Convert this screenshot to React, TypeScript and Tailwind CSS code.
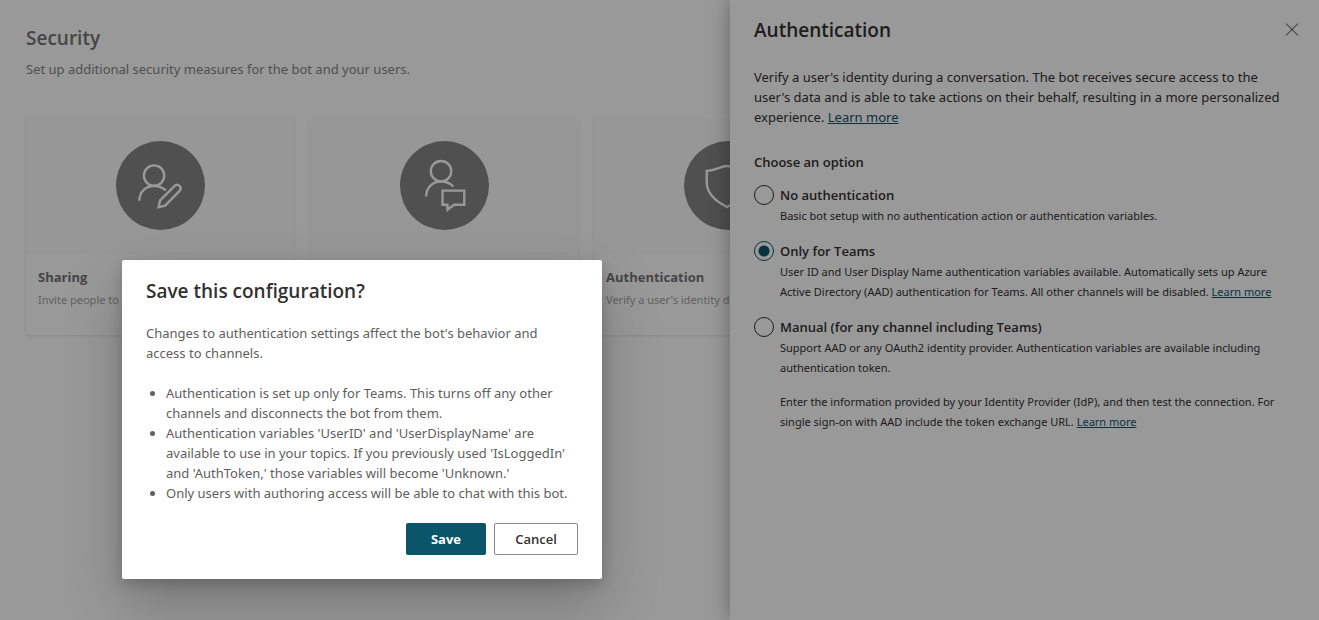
import type { ReactNode } from "react";
import { useState } from "react";

const ShareIcon = () => (
	<svg viewBox="0 0 90 90" className="size-[89px]" fill="none" stroke="white" strokeWidth={2.4}>
		<circle cx="38.500" cy="35" r="10.3" />
		<path d="M23.500 60.500c0-9 6.500-15 15-15 4.500 0 8.800 1.500 11.800 4.500" />
		<path d="M59.300 45.400c1.500-1.500 3.500-1.500 5 0s1.500 3.500 0 5L49.700 65.300l-6.700 1.600 1.600-6.800z" />
	</svg>
);

const AccessIcon = () => (
	<svg viewBox="0 0 90 90" className="size-[89px]" fill="none" stroke="white" strokeWidth={2.4}>
		<circle cx="41.500" cy="30.500" r="10.300" />
		<path d="M26.500 56c0-9 6.500-15 15-15 5 0 9.500 2 12.500 5" />
		<path d="M43 50.200h22v14.300h-10.500l-6.500 5v-5h-5z" />
	</svg>
);

const ShieldIcon = () => (
	<svg viewBox="0 0 90 90" className="size-[89px]" fill="none" stroke="white" strokeWidth={2.4}>
		<path d="M43.500 25.300c-6.500 0-11 4.500-20.500 5v11.500c0 11 7.500 18.500 20.500 25 13-6.500 20.500-14 20.500-25v-11.500c-9.500-.5-14-5-20.500-5z" />
	</svg>
);

const cards = [
	{ title: "Sharing", text: "Invite people to collaborate", icon: <ShareIcon /> },
	{ title: "", text: "", icon: <AccessIcon /> },
	{ title: "Authentication", text: "Verify a user's identity during", icon: <ShieldIcon /> },
];

const LearnMore = () => (
	<a href="#" className="text-[#0b556a] underline underline-offset-1">
		Learn more
	</a>
);

interface OptionProps {
	id: string;
	label: string;
	checked: boolean;
	onChange: () => void;
	children: ReactNode;
}

const Option = ({ id, label, checked, onChange, children }: OptionProps) => (
	<div>
		<div className="flex items-center gap-1.5">
			<input
				type="radio"
				name="auth"
				id={id}
				checked={checked}
				onChange={onChange}
				className="size-5 shrink-0 appearance-none rounded-full border border-[#323130] checked:border-[#0b556a] checked:bg-[radial-gradient(circle,#0b556a_5px,transparent_6px)]"
			/>
			<label htmlFor={id} className="font-['Open_Sans',sans-serif] text-[13px] leading-5 font-semibold">
				{label}
			</label>
		</div>
		<div className="mt-px pl-[26px] text-[11px] leading-5">{children}</div>
	</div>
);

const App = () => {
	const [option, setOption] = useState("teams");

	return (
		<div className="relative min-h-screen overflow-hidden bg-white font-['Noto_Sans','Open_Sans',sans-serif] text-[#323130]">
			{/* Security page */}
			<main className="px-[26px] pt-6 text-[#757575]">
				<h1 className="font-['Open_Sans',sans-serif] text-[19px] leading-7 font-semibold">
					Security
				</h1>
				<p className="mt-[7px] text-[13px] leading-5 text-[#858585]">
					Set up additional security measures for the bot and your users.
				</p>
				<div className="mt-10 flex gap-4">
					{cards.map((card, i) => (
						<section
							key={i}
							className="w-[268px] shrink-0 rounded-xs shadow-[0_1px_3px_rgba(0,0,0,0.1)]"
						>
							<div className="flex h-[135px] justify-center bg-[#fcfcfc] pt-[22px]">
								<div className="size-[89px] rounded-full bg-[#858585]">{card.icon}</div>
							</div>
							<div className="h-[81px] px-3 pt-[13px]">
								<h2 className="font-['Open_Sans',sans-serif] text-[13px] leading-5 font-bold">
									{card.title}
								</h2>
								<p className="mt-[3px] truncate text-[11px] leading-5 text-[#a5a5a5]">
									{card.text}
								</p>
							</div>
						</section>
					))}
				</div>
			</main>

			{/* Authentication panel */}
			<aside className="absolute inset-y-0 right-0 w-[589px] bg-white pr-5 pl-6 shadow-[0_0_20px_rgba(0,0,0,0.35)]">
				<div className="flex items-center justify-between pt-4">
					<h2 className="font-['Open_Sans',sans-serif] text-[19px] leading-7 font-semibold">
						Authentication
					</h2>
					<button type="button" aria-label="Close">
						<svg viewBox="0 0 14 14" className="size-3.5" fill="none" stroke="#323130">
							<path d="M1 0.500l12 12M13 0.500L1 12.500" />
						</svg>
					</button>
				</div>
				<p className="mt-[23px] pr-2 text-[13px] leading-5">
					Verify a user's identity during a conversation. The bot receives secure access to the
					user's data and is able to take actions on their behalf, resulting in a more personalized
					experience. <LearnMore />
				</p>
				<fieldset className="mt-[23px]">
					<legend className="font-['Open_Sans',sans-serif] text-[13px] leading-6 font-semibold">
						Choose an option
					</legend>
					<div className="mt-[11px] flex flex-col gap-[15px]">
						<Option
							id="none"
							label="No authentication"
							checked={option === "none"}
							onChange={() => setOption("none")}
						>
							<p>Basic bot setup with no authentication action or authentication variables.</p>
						</Option>
						<Option
							id="teams"
							label="Only for Teams"
							checked={option === "teams"}
							onChange={() => setOption("teams")}
						>
							<p>
								User ID and User Display Name authentication variables available. Automatically sets
								up Azure Active Directory (AAD) authentication for Teams. All other channels will be
								disabled. <LearnMore />
							</p>
						</Option>
						<Option
							id="manual"
							label="Manual (for any channel including Teams)"
							checked={option === "manual"}
							onChange={() => setOption("manual")}
						>
							<p>
								Support AAD or any OAuth2 identity provider. Authentication variables are available
								including authentication token.
							</p>
							<p className="mt-3.5">
								Enter the information provided by your Identity Provider (IdP), and then test the
								connection. For single sign-on with AAD include the token exchange URL.{" "}
								<LearnMore />
							</p>
						</Option>
					</div>
				</fieldset>
			</aside>

			<div className="absolute inset-0 bg-black/40" />

			{/* Confirmation dialog */}
			<div
				role="dialog"
				aria-labelledby="dialog-title"
				className="absolute top-[260px] left-[122px] w-[480px] rounded-xs bg-white px-6 pt-[17px] pb-6 shadow-[0_26px_58px_rgba(0,0,0,0.22),0_5px_14px_rgba(0,0,0,0.18)]"
			>
				<h2
					id="dialog-title"
					className="font-['Open_Sans',sans-serif] text-[19px] leading-7 font-semibold"
				>
					Save this configuration?
				</h2>
				<div className="mt-[18px] text-[13px] leading-5 text-[#605e5c]">
					<p>
						Changes to authentication settings affect the bot's behavior and access to channels.
					</p>
					<ul className="mt-5 list-disc pl-5">
						<li>
							Authentication is set up only for Teams. This turns off any other channels and
							disconnects the bot from them.
						</li>
						<li>
							Authentication variables 'UserID' and 'UserDisplayName' are available to use in your
							topics. If you previously used 'IsLoggedIn' and 'AuthToken,' those variables will
							become 'Unknown.'
						</li>
						<li>Only users with authoring access will be able to chat with this bot.</li>
					</ul>
				</div>
				<div className="mt-5 flex justify-end gap-2 font-['Open_Sans',sans-serif] text-[13px] leading-5">
					<button
						type="button"
						className="h-8 w-20 rounded-xs bg-[#0b556a] font-bold text-white"
					>
						Save
					</button>
					<button
						type="button"
						className="h-8 w-[84px] rounded-xs border border-[#8a8886] font-semibold"
					>
						Cancel
					</button>
				</div>
			</div>
		</div>
	);
};

export default App;
